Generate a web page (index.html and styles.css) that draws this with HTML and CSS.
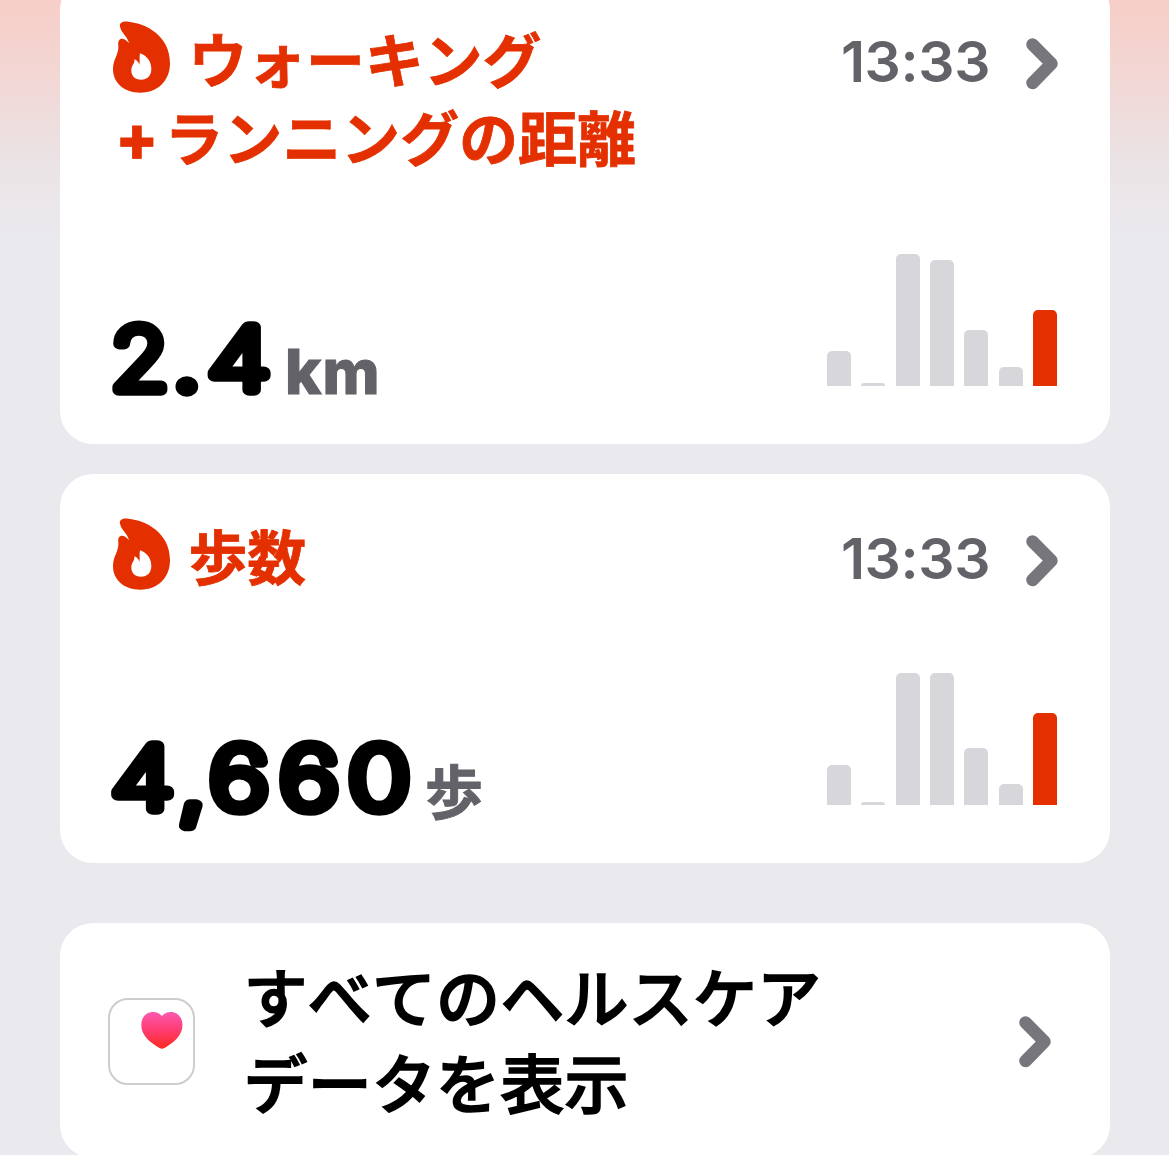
FILE: index.html
```html
<!DOCTYPE html>
<html lang="ja">
<head>
<meta charset="utf-8">
<title>ヘルスケア</title>
<link rel="stylesheet" href="styles.css">
</head>
<body>
<svg class="defs" aria-hidden="true">
  <symbol id="flame" viewBox="69 65 171 214">
    <path fill-rule="evenodd" d="M90 81C87 68 100 64 115 66C168 71 240 108 240 190C240 242 205 279 151 279C104 279 69 251 69 208C69 178 87 166 85 137C82 117 98 108 117 131C113 110 94 101 90 81ZM150 161C170 168 184 185 184 207C184 228 172 240 153 240C135 240 124 228 124 213C124 195 135 194 133 179C140 180 146 188 148 195C151 183 147 172 150 161Z"/>
  </symbol>
  <symbol id="chevron" viewBox="0 0 33 52">
    <path d="M6.5 6.5L25.5 25.7L6.5 45"/>
  </symbol>
</svg>
<main class="feed">
  <section class="card distance">
    <header class="head">
      <svg class="flame"><use href="#flame"/></svg>
      <h2 class="title">ウォーキング</h2>
      <time class="time">13:33</time>
      <svg class="chevron"><use href="#chevron"/></svg>
    </header>
    <h2 class="title second"><span class="plus">+</span>ランニングの距離</h2>
    <div class="data">
      <div class="reading">
        <svg class="value short" viewBox="0 0 166 100"><text transform="scale(1.1 1)" y="69" x=".5">2<tspan class="point" x="57.800">.</tspan></text><text transform="scale(1.2 1)" y="69" x="81.200">4</text></svg>
        <span class="unit">km</span>
      </div>
      <div class="chart">
        <i class="bar" style="height:35px"></i><i class="bar" style="height:3px"></i><i class="bar" style="height:132px"></i><i class="bar" style="height:126px"></i><i class="bar" style="height:56px"></i><i class="bar" style="height:19px"></i><i class="bar today" style="height:76px"></i>
      </div>
    </div>
  </section>
  <section class="card steps">
    <header class="head">
      <svg class="flame"><use href="#flame"/></svg>
      <h2 class="title">歩数</h2>
      <time class="time">13:33</time>
      <svg class="chevron"><use href="#chevron"/></svg>
    </header>
    <div class="data">
      <div class="reading">
        <svg class="value long" viewBox="0 0 306 100"><text transform="scale(1.2 1)" y="69 71.500 69 69 69" x=".9 56.700 82.500 140.800 198.300">4,660</text></svg>
        <span class="unit ja">歩</span>
      </div>
      <div class="chart">
        <i class="bar" style="height:40px"></i><i class="bar" style="height:3px"></i><i class="bar" style="height:132px"></i><i class="bar" style="height:132px"></i><i class="bar" style="height:57px"></i><i class="bar" style="height:21px"></i><i class="bar today" style="height:92px"></i>
      </div>
    </div>
  </section>
  <section class="card all">
    <div class="app">
      <svg class="heart" viewBox="0 0 42 37">
        <defs><linearGradient id="pink" x2="0" y2="1"><stop stop-color="#fa5ab0"/><stop offset=".5" stop-color="#fe3b70"/><stop offset="1" stop-color="#ff2a1f"/></linearGradient></defs>
        <path fill="url(#pink)" d="M21 4C17.500 0 13.500 0 12 0C5 0 .3 5.500 .3 13C.3 24 10 31 18.500 36C20.400 37 21.600 37 23.500 36C32 31 41.500 24 41.500 13C41.500 5.500 36.500 0 30 0C27.500 0 24 .5 21 4Z"/>
      </svg>
    </div>
    <p class="label">すべてのヘルスケア<br>データを表示</p>
    <svg class="chevron"><use href="#chevron"/></svg>
  </section>
</main>
</body>
</html>
```
FILE: styles.css
```css
* { box-sizing: border-box; }

body {
  margin: 0;
  height: 1155px;
  overflow: hidden;
  background: #eae9ee linear-gradient(#f7cec8 0, #f4d4cf 50px, #f0dad9 100px, #ebe3e5 160px, #eae9ee 240px) no-repeat;
  font-family: Inter, "Noto Sans CJK JP", sans-serif;
}

.defs { display: none; }

.feed {
  display: flex;
  flex-direction: column;
  margin-top: -23px;
  padding: 0 59px 0 60px;
}

.card {
  display: flex;
  flex-direction: column;
  border-radius: 33px;
  background: #fff;
  padding: 44px 53px 0 50px;
}

.distance { height: 467px; }
.steps { height: 389px; margin-top: 30px; }

.head { display: flex; height: 78px; }

.flame {
  width: 57px;
  height: 72px;
  margin-left: 3px;
  fill: #e43000;
}

.title {
  margin: -2px 0 0 18.500px;
  font: 700 58.800px/78px "Noto Sans CJK JP", sans-serif;
  font-kerning: none;
  color: #e43000;
  -webkit-text-stroke: .8px #e43000;
  white-space: nowrap;
}

.title.second { margin-left: 0; letter-spacing: .15px; }

.plus {
  display: inline-block;
  width: 55px;
  margin-right: -.5px;
  text-align: center;
  text-indent: -1px;
  font: 800 63px/1 Inter, sans-serif;
}

.time {
  margin-left: auto;
  font-size: 57px;
  font-weight: 580;
  line-height: 82px;
  letter-spacing: -.4px;
  color: #636268;
}

.chevron {
  flex: none;
  width: 33px;
  height: 52px;
  margin: 17px -2px 0 36px;
  fill: none;
  stroke: #77767c;
  stroke-width: 12.500px;
  stroke-linecap: round;
  stroke-linejoin: round;
}

.data {
  display: flex;
  justify-content: space-between;
  align-items: flex-end;
  margin-top: auto;
}

.reading { display: flex; height: 123px; }

.value {
  height: 100px;
  overflow: visible;
  font: 200 86px Inter, sans-serif;
  stroke: #000;
  stroke-width: 11.600px;
  stroke-linejoin: round;
}

.point { font-weight: 300; }

.short { width: 166px; }
.long { width: 306px; }

.unit {
  margin: 14px 0 0 9px;
  font-size: 61.500px;
  font-weight: 800;
  line-height: 74px;
  letter-spacing: 1px;
  color: #636268;
  -webkit-text-stroke: 1px #636268;
}

.ja {
  margin-top: 12px;
  font-family: "Noto Sans CJK JP", sans-serif;
  font-size: 58px;
  font-weight: 700;
}

.chart {
  display: flex;
  align-items: flex-end;
  gap: 10.330px;
  margin-bottom: 58px;
}

.bar {
  width: 24px;
  border-radius: 5px 5px 0 0;
  background: #d7d6db;
}

.today { background: #e43000; }

.all {
  flex-direction: row;
  align-items: center;
  height: 235px;
  margin-top: 60px;
  padding: 0 59px 0 48px;
}

.app {
  width: 87px;
  height: 87px;
  margin-top: 2px;
  padding: 13px 0 0 32px;
  border: 2px solid #cdcdcd;
  border-radius: 20px;
}

.heart { display: block; width: 42px; height: 37px; margin: -1px 0 0 -1px; }

.label {
  margin: -8px 0 0 48.500px;
  font: 500 64px/86px "Noto Sans CJK JP", sans-serif;
  font-kerning: none;
  letter-spacing: .2px;
  color: #000;
  -webkit-text-stroke: 1.600px #000;
}

.all .chevron { margin: 3px -1px 0 auto; }
```
